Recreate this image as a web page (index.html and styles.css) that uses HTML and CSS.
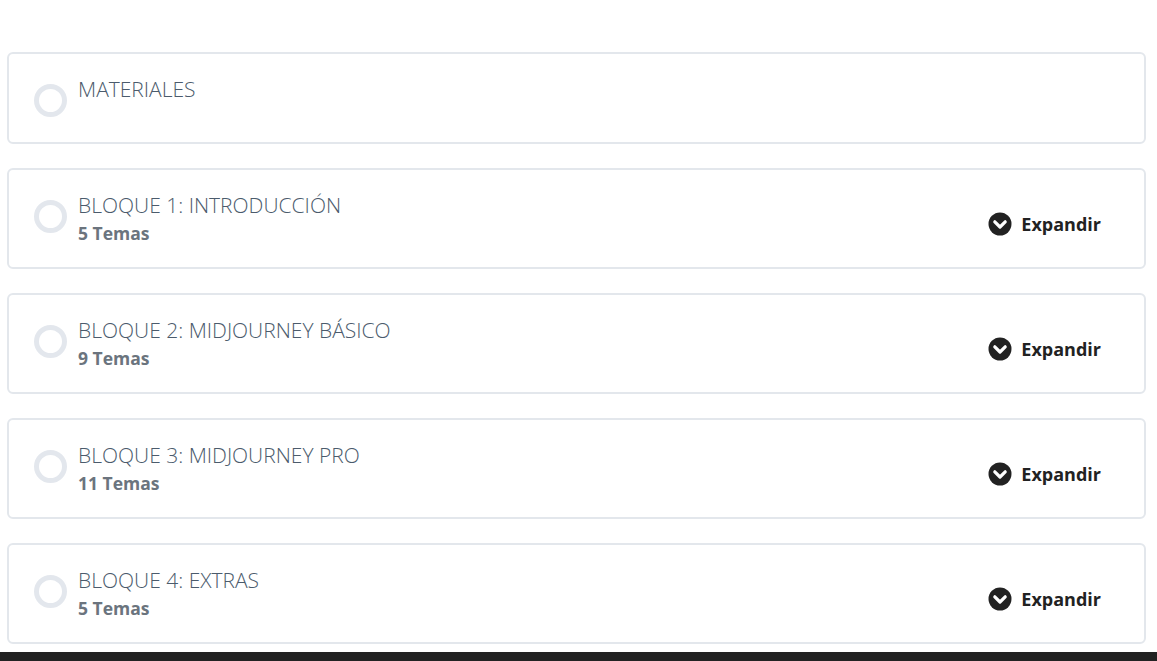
FILE: index.html
```html
<!DOCTYPE html>
<html lang="es">
<head>
<meta charset="utf-8">
<title>Curso</title>
<link rel="stylesheet" href="styles.css">
</head>
<body>
<main class="page">
  <section class="list">
    <div class="card card-single">
      <span class="status"></span>
      <div class="info">
        <div class="title">MATERIALES</div>
      </div>
    </div>
    <div class="card">
      <span class="status"></span>
      <div class="info">
        <div class="title">BLOQUE 1: INTRODUCCIÓN</div>
        <div class="count">5 Temas</div>
      </div>
      <button class="expand"><svg class="ico" viewBox="0 0 24 24"><circle cx="12" cy="12" r="11.5" fill="#222"/><path d="M6.8 9.8 L12 15 L17.2 9.8" fill="none" stroke="#fff" stroke-width="3.2" stroke-linecap="round" stroke-linejoin="round"/></svg><span>Expandir</span></button>
    </div>
    <div class="card">
      <span class="status"></span>
      <div class="info">
        <div class="title">BLOQUE 2: MIDJOURNEY BÁSICO</div>
        <div class="count">9 Temas</div>
      </div>
      <button class="expand"><svg class="ico" viewBox="0 0 24 24"><circle cx="12" cy="12" r="11.5" fill="#222"/><path d="M6.8 9.8 L12 15 L17.2 9.8" fill="none" stroke="#fff" stroke-width="3.2" stroke-linecap="round" stroke-linejoin="round"/></svg><span>Expandir</span></button>
    </div>
    <div class="card">
      <span class="status"></span>
      <div class="info">
        <div class="title">BLOQUE 3: MIDJOURNEY PRO</div>
        <div class="count">11 Temas</div>
      </div>
      <button class="expand"><svg class="ico" viewBox="0 0 24 24"><circle cx="12" cy="12" r="11.5" fill="#222"/><path d="M6.8 9.8 L12 15 L17.2 9.8" fill="none" stroke="#fff" stroke-width="3.2" stroke-linecap="round" stroke-linejoin="round"/></svg><span>Expandir</span></button>
    </div>
    <div class="card">
      <span class="status"></span>
      <div class="info">
        <div class="title">BLOQUE 4: EXTRAS</div>
        <div class="count">5 Temas</div>
      </div>
      <button class="expand"><svg class="ico" viewBox="0 0 24 24"><circle cx="12" cy="12" r="11.5" fill="#222"/><path d="M6.8 9.8 L12 15 L17.2 9.8" fill="none" stroke="#fff" stroke-width="3.2" stroke-linecap="round" stroke-linejoin="round"/></svg><span>Expandir</span></button>
    </div>
  </section>
</main>
<footer class="footer"></footer>
</body>
</html>
```
FILE: styles.css
```css
html, body {
  margin: 0;
  padding: 0;
  background: #fff;
  font-family: "Open Sans", "Liberation Sans", sans-serif;
}
.page {
  padding: 52px 11px 8px 7px;
}
.list {
  display: flex;
  flex-direction: column;
  gap: 24px;
}
.card {
  display: flex;
  align-items: flex-start;
  border: 2px solid #e3e7ec;
  border-radius: 6px;
  padding: 21px 43px 22px 25px;
  min-height: 54px;
}
.card-single {
  min-height: 45px;
}
.status {
  flex: none;
  width: 33px;
  height: 33px;
  box-sizing: border-box;
  border: 5px solid #e3e7ed;
  border-radius: 50%;
  margin-top: 9px;
  margin-right: 11px;
}
.info {
  flex: 1;
  min-width: 0;
}
.title {
  font-size: 21px;
  font-weight: 300;
  line-height: 28px;
  color: #4b5b6c;
}
.count {
  margin-top: 2px;
  font-size: 17.5px;
  font-weight: 700;
  line-height: 24px;
  color: #6b747e;
}
.expand {
  align-self: center;
  margin-top: 12px;
  display: flex;
  align-items: center;
  gap: 9px;
  border: 0;
  background: none;
  padding: 0;
  font-family: inherit;
  font-size: 18px;
  font-weight: 700;
  color: #222;
  cursor: pointer;
}
.ico {
  width: 24px;
  height: 24px;
  display: block;
}
.footer {
  height: 9px;
  background: #222;
}
```
